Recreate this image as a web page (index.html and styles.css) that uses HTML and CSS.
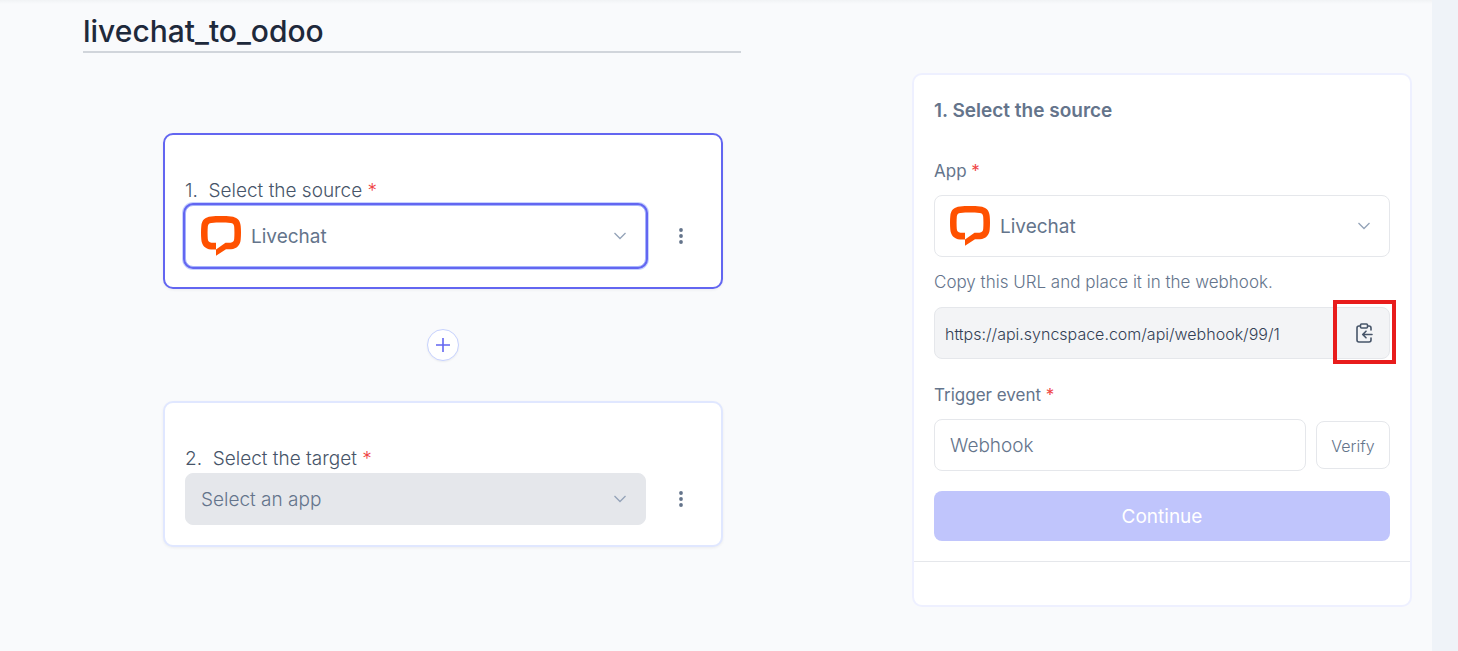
FILE: index.html
```html
<!DOCTYPE html>
<html lang="en">
<head>
<meta charset="utf-8">
<meta name="viewport" content="width=device-width, initial-scale=1">
<title>livechat_to_odoo</title>
<link rel="stylesheet" href="styles.css">
</head>
<body>
<svg class="sprite" aria-hidden="true">
  <symbol id="livechat" viewBox="0 0 40 40">
    <path fill="#ff5100" fill-rule="evenodd" d="M10 0.5C16 -0.1 24 -0.1 30 0.5C36 1 39.3 4.300 39.700 10C40.100 14 40.100 19 39.700 23.500C39.300 29 36 32.700 30 33.300H25L15 39.800V33.500H10C4 33 0.700 29 0.300 23.500C-0.100 19 -0.100 14 0.300 10C0.700 4.300 4 1 10 0.500ZM15 26.700V33.500L24.500 26.700H29.500C32 26.500 33 25.200 33.200 23C33.500 19 33.500 14.500 33.200 10.700C33 8.300 32 7.100 29.500 6.900C23.500 6.500 16.500 6.500 10.500 6.900C8 7.100 7 8.300 6.800 10.700C6.500 14.500 6.500 19 6.800 23C7 25.200 8 26.500 10.500 26.700Z"/>
  </symbol>
  <symbol id="chevron" viewBox="0 0 12 8">
    <path d="M0.500 1L6 6.500L11.500 1" fill="none" stroke="currentColor" stroke-width="1.300"/>
  </symbol>
  <symbol id="dots" viewBox="0 0 4 16">
    <circle cx="2" cy="2" r="1.900"/><circle cx="2" cy="8" r="1.900"/><circle cx="2" cy="14" r="1.900"/>
  </symbol>
</svg>
<div class="page">
  <main class="main">
    <section class="flow">
      <input class="title" type="text" value="livechat_to_odoo" aria-label="Workflow name">
      <div class="steps">
        <div class="card card-active">
          <label class="step-label" for="source">1.&nbsp; Select the source <span class="req">*</span></label>
          <div class="step-row">
            <div class="picker picker-app picker-focus">
              <svg class="logo" aria-hidden="true"><use href="#livechat"/></svg>
              <select id="source"><option>Livechat</option></select>
              <svg class="chevron" aria-hidden="true"><use href="#chevron"/></svg>
            </div>
            <button class="more" type="button" aria-label="Source options"><svg><use href="#dots"/></svg></button>
          </div>
        </div>
        <button class="add" type="button" aria-label="Add step"><svg viewBox="0 0 14 14"><path d="M7 0V14M0 7H14" stroke="currentColor" stroke-width="1.600"/></svg></button>
        <div class="card">
          <label class="step-label" for="target">2.&nbsp; Select the target <span class="req">*</span></label>
          <div class="step-row">
            <div class="picker picker-disabled">
              <select id="target" disabled><option>Select an app</option></select>
              <svg class="chevron" aria-hidden="true"><use href="#chevron"/></svg>
            </div>
            <button class="more" type="button" aria-label="Target options"><svg><use href="#dots"/></svg></button>
          </div>
        </div>
      </div>
    </section>
    <aside class="panel">
      <form class="panel-body">
        <h2>1. Select the source</h2>
        <label class="field-label" for="app">App <span class="req">*</span></label>
        <div class="picker picker-app">
          <svg class="logo" aria-hidden="true"><use href="#livechat"/></svg>
          <select id="app"><option>Livechat</option></select>
          <svg class="chevron" aria-hidden="true"><use href="#chevron"/></svg>
        </div>
        <label class="hint" for="url">Copy this URL and place it in the webhook.</label>
        <div class="url">
          <input id="url" type="text" readonly value="https://api.syncspace.com/api/webhook/99/1">
          <button class="copy" type="button" aria-label="Copy URL">
            <svg viewBox="0 0 17 20" fill="none" stroke="currentColor" stroke-width="1.600" stroke-linecap="round" stroke-linejoin="round"><path d="M4.500 3H3Q1 3 1 5V17Q1 19 3 19H13Q15 19 15 17V15M15 7V5Q15 3 13 3H11.500M5.500 1H10.500Q11.500 1 11.500 2V4Q11.500 5 10.500 5H5.500Q4.500 5 4.500 4V2Q4.500 1 5.500 1ZM16 11.500H7M10 8.200L6.700 11.500L10 14.800"/></svg>
          </button>
        </div>
        <label class="field-label" for="event">Trigger event <span class="req">*</span></label>
        <div class="event-row">
          <input id="event" class="event" type="text" value="Webhook">
          <button class="verify" type="button">Verify</button>
        </div>
        <button class="continue" type="button">Continue</button>
      </form>
      <div class="panel-foot"></div>
    </aside>
  </main>
</div>
</body>
</html>
```
FILE: styles.css
```css
* { box-sizing: border-box; }
body {
  margin: 0;
  background: #eff3f8;
  font-family: Inter, "Liberation Sans", sans-serif;
  color: #64748b;
}
button, input, select { font: inherit; color: inherit; margin: 0; }
button { cursor: pointer; padding: 0; }
.sprite { position: absolute; width: 0; height: 0; }
.page { padding-right: 26px; min-height: 100vh; display: flex; }
.main {
  flex: 1;
  display: flex;
  align-items: flex-start;
  justify-content: space-between;
  gap: 40px;
  padding: 8px 20px 40px 83px;
  background: linear-gradient(#f1f3f5, #f9fafc 4px);
}
.flow { flex: 0 1 720px; min-width: 0; }
.title {
  display: block;
  width: 100%;
  max-width: 658px;
  height: 45px;
  padding: 2px 0 0;
  border: 0;
  border-bottom: 2px solid #d1d5db;
  background: none;
  font-size: 30px;
  font-weight: 500;
  color: #1e293b;
}
.steps {
  display: flex;
  flex-direction: column;
  align-items: center;
  gap: 40px;
  padding-top: 80px;
}
.card {
  width: 100%;
  max-width: 560px;
  padding: 42px 20px 20px;
  border: 2px solid #e0e7ff;
  border-radius: 10px;
  background: #fff;
  box-shadow: 0 1px 3px rgba(15, 23, 42, 0.06);
}
.card-active { border-color: #6366f1; }
.step-label {
  display: block;
  line-height: 28px;
  font-size: 19px;
  font-weight: 300;
  color: #475569;
}
.req { color: #ef4444; }
.step-row { display: flex; align-items: center; gap: 20px; }
.picker { position: relative; flex: 1; height: 52px; }
.picker select {
  appearance: none;
  display: block;
  width: 100%;
  height: 100%;
  padding: 0 40px 0 15px;
  border: 1px solid #e5e7eb;
  border-radius: 8px;
  background: #fff;
  font-size: 19px;
  opacity: 1;
}
.picker-app { height: 62px; }
.picker-app select { padding-left: 65px; }
.picker-focus select {
  border-color: #a5b4fc;
  box-shadow: 0 0 0 2px #6366f1, 0 0 0 3px #c7d2fe;
}
.picker-disabled select { background: #e5e7eb; font-weight: 300; color: #64748b; }
.logo { position: absolute; left: 16px; top: 11px; width: 40px; height: 40px; pointer-events: none; }
.chevron {
  position: absolute;
  right: 20px;
  top: 50%;
  width: 12px;
  height: 8px;
  margin-top: -4px;
  color: #94a3b8;
  pointer-events: none;
}
.more { display: grid; place-items: center; width: 30px; height: 30px; margin-right: 5px; border: 0; background: none; }
.more svg { width: 4px; height: 16px; fill: #64748b; }
.add {
  display: grid;
  place-items: center;
  width: 32px;
  height: 32px;
  border: 1px solid #c7d2fe;
  border-radius: 50%;
  background: #fff;
  color: #6366f1;
  box-shadow: 0 1px 2px rgba(15, 23, 42, 0.06);
}
.add svg { width: 14px; height: 14px; }
.panel {
  flex: 0 0 500px;
  margin-top: 65px;
  border: 2px solid #eef0ff;
  border-radius: 10px;
  background: #fff;
}
.panel-body { padding: 22px 20px 20px; border-bottom: 1px solid #e5e7eb; }
.panel-foot { height: 43px; }
.panel h2 { margin: 0 0 31px; font-size: 19px; line-height: 28px; font-weight: 600; }
.field-label { display: block; margin-bottom: 9px; font-size: 17px; line-height: 30px; }
.hint { display: block; margin: 10px 0; font-size: 17px; line-height: 30px; font-weight: 300; }
.url {
  display: flex;
  height: 52px;
  margin-bottom: 21px;
  border: 1px solid #e5e7eb;
  border-radius: 8px;
  background: #f3f4f6;
}
.url input {
  flex: 1;
  min-width: 0;
  padding: 2px 10px 0;
  border: 0;
  background: none;
  font-size: 16px;
  font-weight: 300;
  color: #334155;
}
.copy { position: relative; display: grid; place-items: center; width: 50px; border: 0; background: none; color: #475569; }
.copy svg { width: 17px; height: 20px; }
.copy::after { content: ""; position: absolute; inset: -8px -7px -6px -6px; border: 4px solid #e81c1c; }
.event-row { display: flex; align-items: center; gap: 10px; }
.event {
  flex: 1;
  min-width: 0;
  height: 52px;
  padding: 0 15px;
  border: 1px solid #e5e7eb;
  border-radius: 8px;
  background: #fff;
  font-size: 19px;
  font-weight: 300;
}
.verify {
  width: 74px;
  height: 48px;
  padding-top: 2px;
  border: 1px solid #e5e7eb;
  border-radius: 8px;
  background: #fff;
  font-size: 16px;
  font-weight: 300;
}
.continue {
  display: block;
  width: 100%;
  height: 50px;
  margin-top: 20px;
  border: 0;
  border-radius: 8px;
  background: #c0c5fc;
  color: #fff;
  font-size: 19px;
}
```
